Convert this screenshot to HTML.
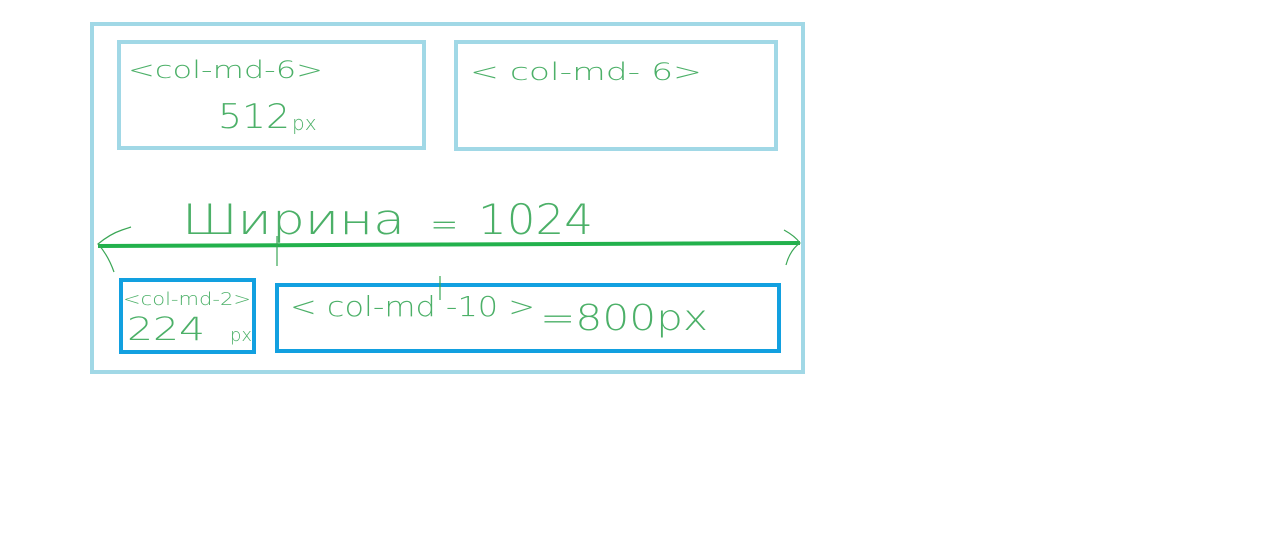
<!DOCTYPE html>
<html><head><meta charset="utf-8"><style>
html,body{margin:0;padding:0;background:#fff;width:1274px;height:559px;overflow:hidden}
svg{display:block}
text{font-family:"DejaVu Sans","Liberation Sans",sans-serif;font-weight:200;fill:#4cb068}
</style></head><body>
<svg width="1274" height="559" viewBox="0 0 1274 559" xmlns="http://www.w3.org/2000/svg">
<rect x="92" y="24" width="711" height="348" fill="none" stroke="#a1d8e6" stroke-width="4"/>
<rect x="119" y="42" width="305" height="106" fill="none" stroke="#a1d8e6" stroke-width="4"/>
<rect x="456" y="42" width="320" height="107" fill="none" stroke="#a1d8e6" stroke-width="4"/>
<rect x="121" y="280" width="133" height="72" fill="none" stroke="#12a0e0" stroke-width="4"/>
<rect x="277" y="285" width="502" height="66" fill="none" stroke="#12a0e0" stroke-width="4"/>
<line x1="98" y1="246" x2="800" y2="243" stroke="#22b14c" stroke-width="4"/>
<path d="M131 227 L122 230 Q110 234 98 244 Q108 255 114 272" fill="none" stroke="#3aa655" stroke-width="1.2"/>
<path d="M784 230 Q795 236 800 243 Q790 250 786 265" fill="none" stroke="#3aa655" stroke-width="1.2"/>
<line x1="277" y1="236" x2="277" y2="266" stroke="#3aa655" stroke-width="1.2"/>
<line x1="440" y1="276" x2="440" y2="300" stroke="#3aa655" stroke-width="1.2"/>
<g font-size="24">
<text x="128" y="78" textLength="195" lengthAdjust="spacingAndGlyphs">&lt;col-md-6&gt;</text>
<text x="218" y="128" font-size="34" textLength="72" lengthAdjust="spacingAndGlyphs">512</text>
<text x="292" y="130" font-size="20">px</text>
<text x="470" y="80" textLength="232" lengthAdjust="spacingAndGlyphs">&lt; col-md- 6&gt;</text>
<text x="182" y="234" font-size="42" textLength="223" lengthAdjust="spacingAndGlyphs">Ширина</text>
<text x="430" y="236" font-size="34">=</text>
<text x="478" y="234" font-size="42" textLength="115" lengthAdjust="spacingAndGlyphs">1024</text>
<text x="123" y="305" font-size="18" textLength="128" lengthAdjust="spacingAndGlyphs">&lt;col-md-2&gt;</text>
<text x="127" y="340" font-size="32" textLength="78" lengthAdjust="spacingAndGlyphs">224</text>
<text x="230" y="341" font-size="18">px</text>
<text x="290" y="316" font-size="28" textLength="245" lengthAdjust="spacingAndGlyphs">&lt; col-md -10 &gt;</text>
<text x="540" y="330" font-size="36" textLength="168" lengthAdjust="spacingAndGlyphs">=800px</text>
</g>
</svg>
</body></html>
